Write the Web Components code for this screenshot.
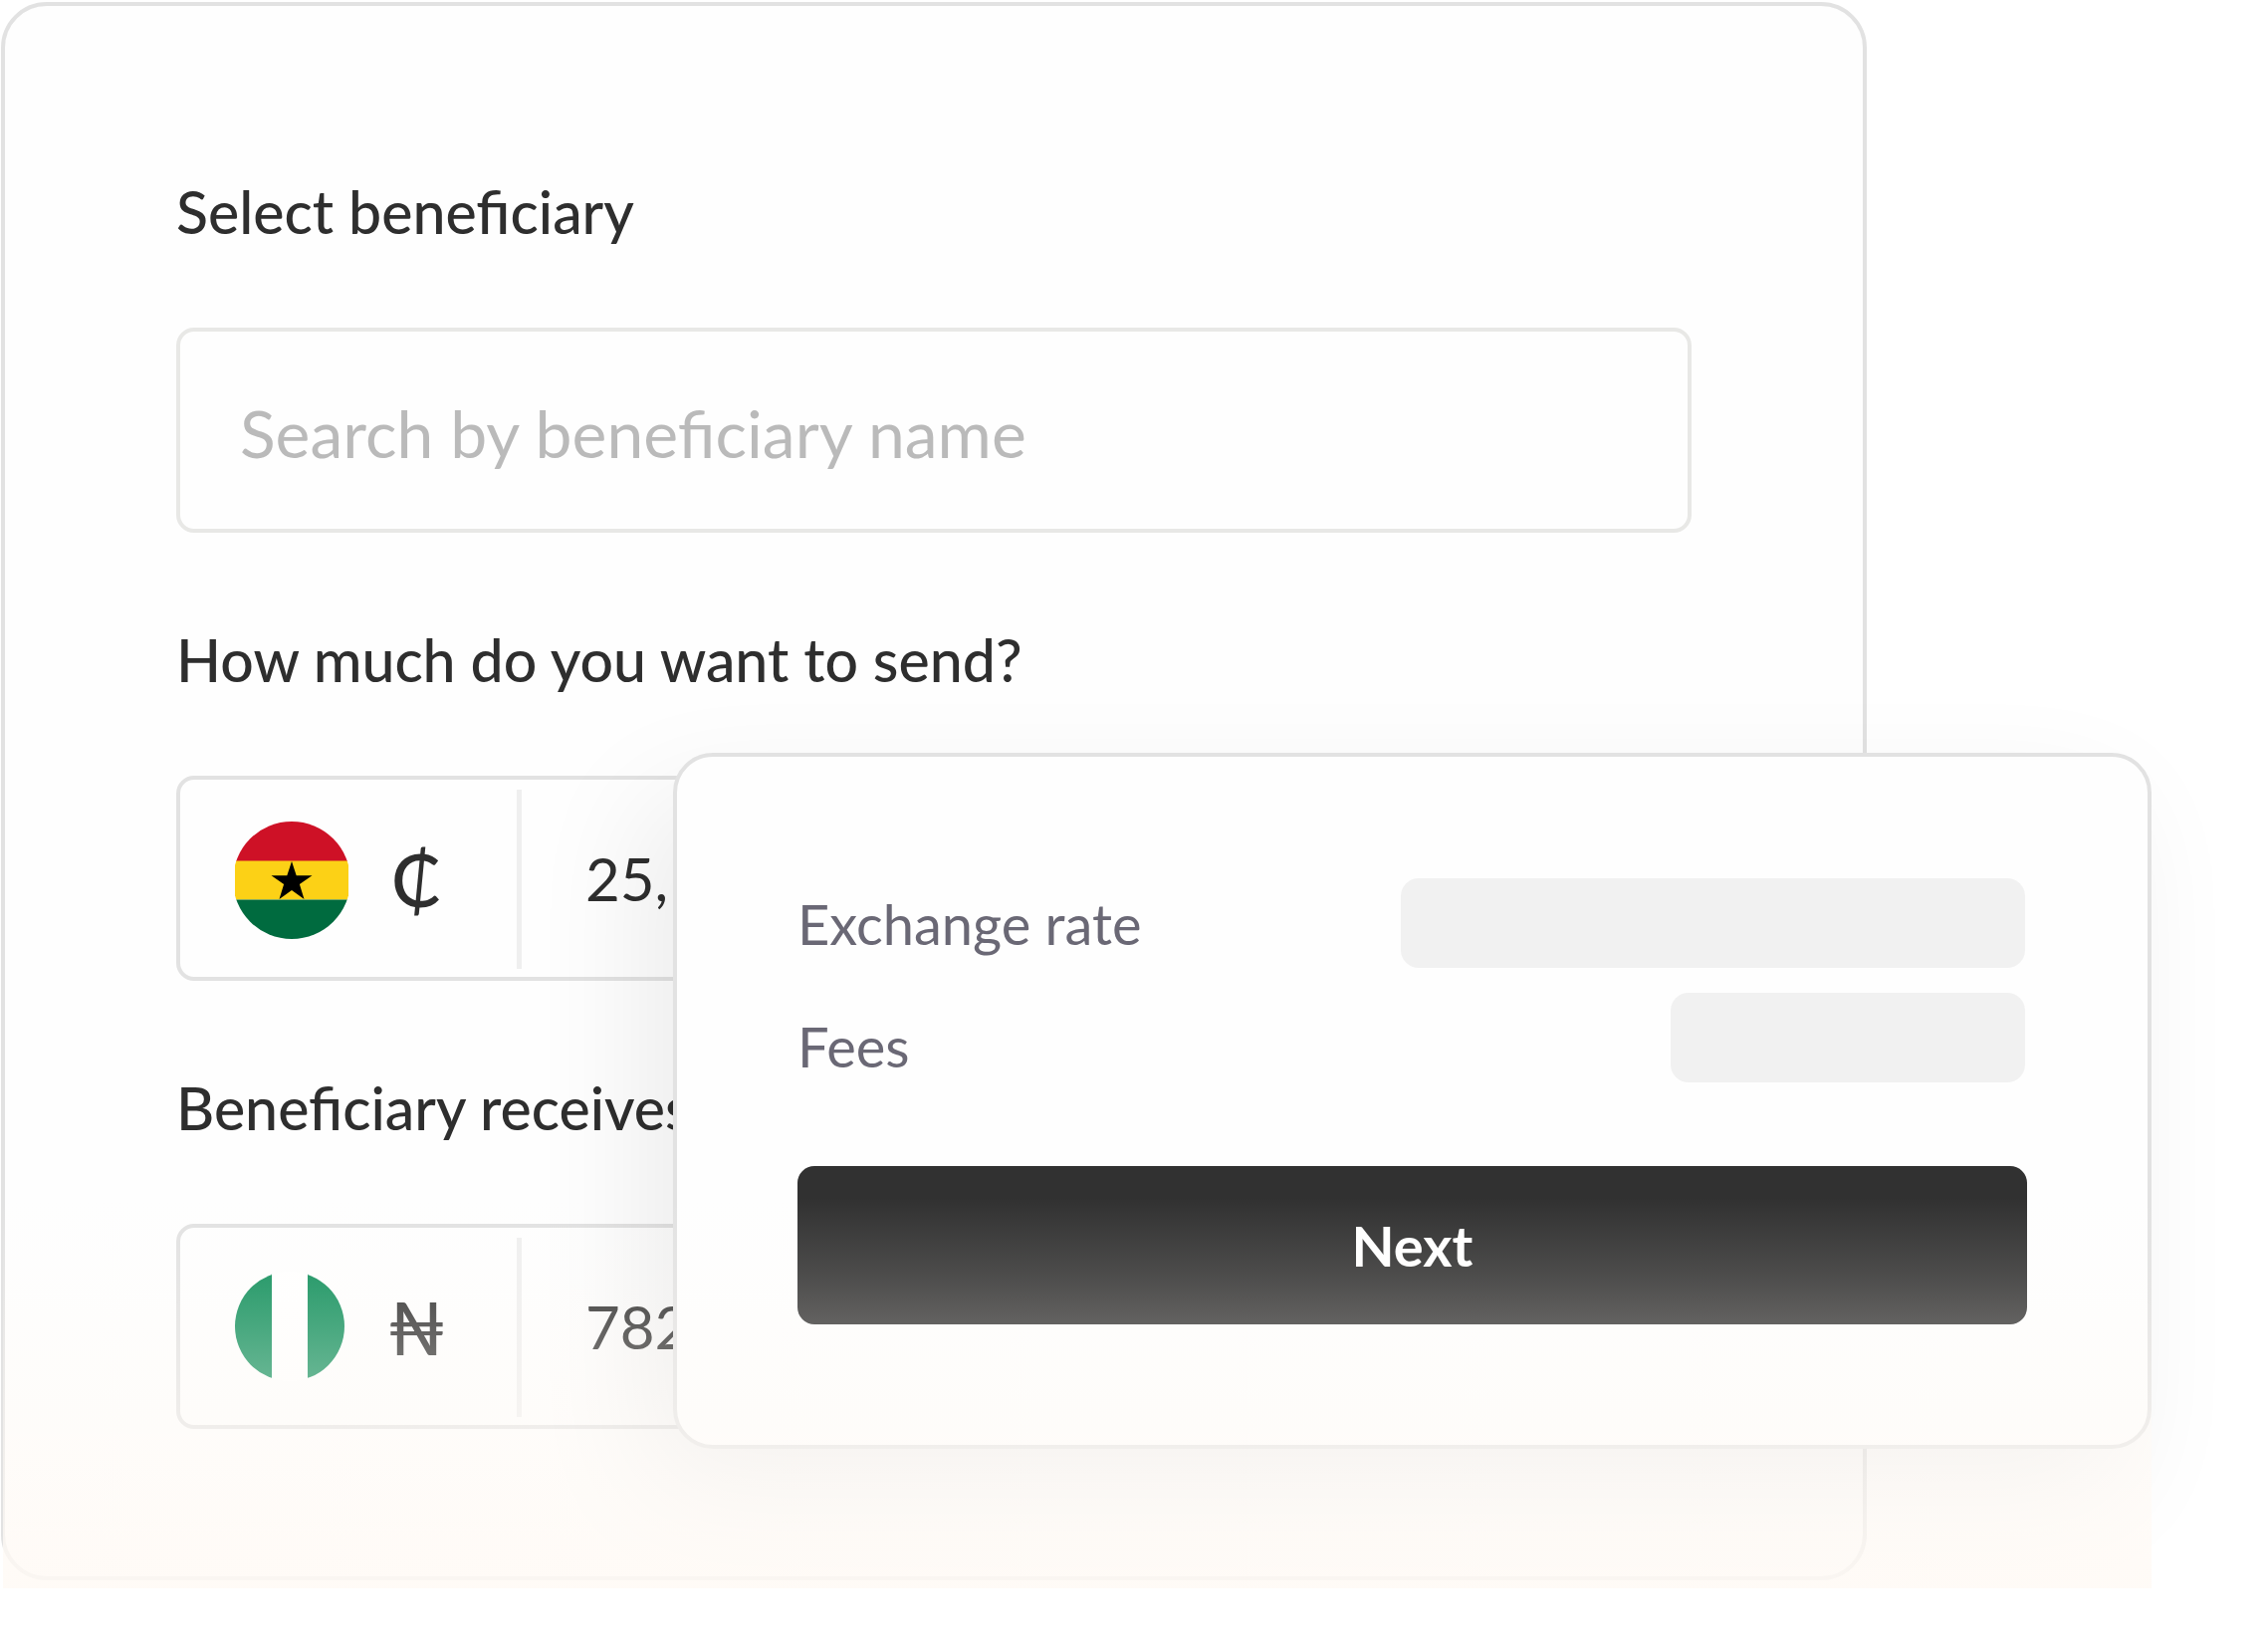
<!DOCTYPE html>
<html lang="en">
<head>
<meta charset="utf-8">
<title>Send money</title>
<style>
  body { margin: 0; background: #fff; font-family: Lato, "Liberation Sans", sans-serif; color: #2e2e2e; }
</style>
</head>
<body>
<send-money></send-money>

<script>
const define = (name, html) => {
  const template = document.createElement('template');
  template.innerHTML = html;
  customElements.define(name, class extends HTMLElement {
    constructor() {
      super();
      this.attachShadow({ mode: 'open' }).append(template.content.cloneNode(true));
    }
    connectedCallback() {
      const input = this.shadowRoot.querySelector('input');
      if (!input) return;
      this.shadowRoot.querySelector('label').textContent = this.getAttribute('label');
      input.value = this.getAttribute('value') || '';
      input.placeholder = this.getAttribute('placeholder') || '';
    }
  });
};

const fieldStyles = `
  :host { display: flex; flex-direction: column; gap: 80px; }
  label { font-size: 59px; font-weight: 500; line-height: 73px; white-space: nowrap; }
  .box { box-sizing: border-box; height: 206px; display: flex; align-items: center; border: 4px solid #e2e2e2; border-radius: 18px; }
  input { flex: 1; min-width: 0; border: 0; outline: 0; padding: 0; background: none; font: inherit; color: inherit; }
`;

define('flag-ghana', `
  <style>:host { display: block; } svg { display: block; }</style>
  <svg width="114" height="122" viewBox="0 -4 114 122" role="img" aria-label="Ghana">
    <clipPath id="disc"><circle cx="57" cy="59" r="59"/></clipPath>
    <g clip-path="url(#disc)">
      <path fill="#ce1126" d="M0 0h114v40H0z"/>
      <path fill="#fcd116" d="M0 39.500h114v39H0z"/>
      <path fill="#006b3f" d="M0 78.500h114v40H0z"/>
      <path fill="#000" d="M57 40l4.700 14.300H77.500L64.900 63.100 69.500 78 57 69 44.500 78 49.100 63.100 36.500 54.300H52.300z"/>
    </g>
  </svg>`);

define('flag-nigeria', `
  <style>:host { display: block; } svg { display: block; }</style>
  <svg width="110" height="110" viewBox="0 0 110 110" role="img" aria-label="Nigeria">
    <clipPath id="disc"><circle cx="55" cy="55" r="55"/></clipPath>
    <g clip-path="url(#disc)">
      <path fill="#fff" d="M37 0h36v110H37z"/>
      <path fill="#0c8d58" d="M0 0h37v110H0zM73 0h37v110H73z"/>
    </g>
  </svg>`);

define('search-field', `
  <style>${fieldStyles}
    .box { padding: 4px 60px 0; border-color: #e8e8e6; }
    input { font-size: 66px; }
    input::placeholder { color: #bababa; opacity: 1; }
  </style>
  <label for="search"></label>
  <div class="box"><input id="search" type="text"></div>`);

define('amount-field', `
  <style>${fieldStyles}
    .currency { box-sizing: border-box; width: 338px; padding-left: 55px; display: flex; align-items: center; gap: 43px; }
    .symbol { font-size: 74px; font-weight: 500; line-height: 88px; padding-top: 2px; }
    .rule { align-self: stretch; width: 5px; margin: 10px 64px 8px 0; background: #efefef; }
    input { font-size: 60px; }
  </style>
  <label for="amount"></label>
  <div class="box">
    <div class="currency"><slot name="flag"></slot><span class="symbol"><slot name="symbol"></slot></span></div>
    <div class="rule"></div>
    <input id="amount" type="text" inputmode="decimal">
  </div>`);

define('form-card', `
  <style>
    :host { display: flex; flex-direction: column; gap: 91px; box-sizing: border-box; padding: 170px 172px 148px; border: 4px solid #e2e2e2; border-radius: 46px; background: #fefefe; }
  </style>
  <slot></slot>`);

define('quote-card', `
  <style>
    :host { display: flex; flex-direction: column; box-sizing: border-box; padding: 122px 121px 121px; border: 4px solid #e2e2e2; border-radius: 40px; background: #fefefe; box-shadow: -30px 45px 120px rgba(0, 0, 0, .075); }
    .rows { display: flex; justify-content: space-between; align-items: flex-start; padding-right: 2px; }
    .names { display: flex; flex-direction: column; gap: 55px; padding-top: 12px; font-size: 56px; line-height: 68px; color: #6a6875; }
    .values { display: flex; flex-direction: column; align-items: flex-end; gap: 25px; }
    button { margin-top: 84px; height: 159px; border: 0; padding: 0; border-radius: 17px; background: #313131; color: #fff; font: bold 56px/68px Lato, "Liberation Sans", sans-serif; }
  </style>
  <div class="rows">
    <div class="names"><slot name="name"></slot></div>
    <div class="values"><slot name="value"></slot></div>
  </div>
  <button type="button">Next</button>`);

define('pending-value', `
  <style>:host { display: block; width: var(--pending-width); height: 90px; border-radius: 18px; background: #f1f1f1; }</style>`);

define('send-money', `
  <style>
    :host { display: block; position: relative; padding: 2px 403px 8px 1px; }
    quote-card { position: absolute; top: 756px; left: 676px; right: 117px; }
    .fade { position: absolute; left: 3px; right: 117px; bottom: 0; height: 392px; pointer-events: none;
      background: linear-gradient(rgba(255, 250, 245, 0), rgba(255, 250, 245, .13) 19%, rgba(255, 250, 245, .24) 32%, rgba(255, 250, 245, .37) 46%, rgba(255, 250, 245, .86)); }
  </style>
  <form-card>
    <search-field label="Select beneficiary" placeholder="Search by beneficiary name"></search-field>
    <amount-field label="How much do you want to send?" value="25,">
      <flag-ghana slot="flag"></flag-ghana><span slot="symbol">₵</span>
    </amount-field>
    <amount-field label="Beneficiary receives" value="782">
      <flag-nigeria slot="flag"></flag-nigeria><span slot="symbol">₦</span>
    </amount-field>
  </form-card>
  <quote-card>
    <span slot="name">Exchange rate</span>
    <span slot="name">Fees</span>
    <pending-value slot="value" style="--pending-width: 627px"></pending-value>
    <pending-value slot="value" style="--pending-width: 356px"></pending-value>
  </quote-card>
  <div class="fade"></div>`);
</script>
</body>
</html>
